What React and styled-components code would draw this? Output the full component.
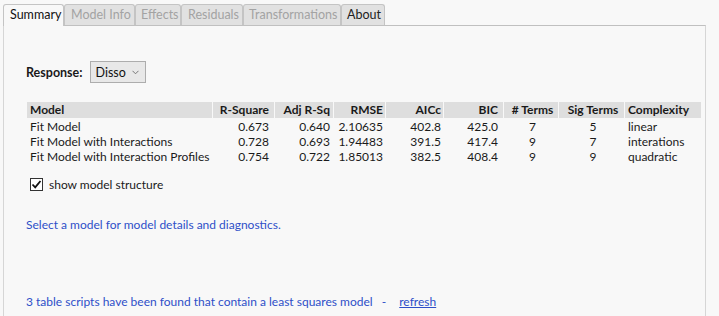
import React from "react";
import styled, { createGlobalStyle } from "styled-components";

const Global = createGlobalStyle`
  html, body { margin: 0; padding: 0; background: #f8f8f8; }
  body { font-family: Lato, "Noto Sans", sans-serif; font-size: 12px; color: #1a1a1a; }
`;

const Page = styled.div`
  padding: 4px 5px 0 3px;
  width: 711px;
  height: 316px;
  box-sizing: border-box;
  display: flex;
  flex-direction: column;
`;

const TabBar = styled.div`
  display: flex;
  height: 22px;
  position: relative;
  z-index: 1;
`;

const Tab = styled.div`
  box-sizing: border-box;
  width: ${(p) => p.$w}px;
  height: ${(p) => (p.$active ? 22 : 21)}px;
  padding-left: ${(p) => p.$pl}px;
  line-height: 20px;
  font-size: 12.5px;
  border: 1px solid #c4c4c4;
  border-bottom: none;
  border-radius: 3px 3px 0 0;
  background: ${(p) => (p.$active ? "#f8f8f8" : "#e1e1e1")};
  color: ${(p) => (p.$active ? "#111" : p.$dim ? "#a3a3a3" : "#222")};
  white-space: nowrap;
`;

const Panel = styled.div`
  flex: 1;
  margin-top: -1px;
  border-top: 1px solid #c0c0c0;
  border-left: 1px solid #d6d6d6;
  border-right: 1px solid #d6d6d6;
  padding: 35px 0 0 22px;
  box-sizing: border-box;
  display: flex;
  flex-direction: column;
`;

const ResponseRow = styled.div`
  display: flex;
  align-items: center;
  gap: 7px;
`;

const Label = styled.span`
  font-weight: 700;
  font-size: 12.5px;
`;

const Select = styled.div`
  box-sizing: border-box;
  width: 56px;
  height: 22px;
  border: 1px solid #adadad;
  background: #e8e8e8;
  display: flex;
  align-items: center;
  justify-content: space-between;
  padding: 0 6px 0 5px;
  font-size: 12.5px;
  color: #111;
`;

const Table = styled.div`
  margin-top: 19px;
  margin-left: 1px;
  display: grid;
  grid-template-columns: 185px 61px 58px 51px 57px 59px 54px 65px 76px;
  column-gap: 1px;
  width: max-content;
`;

const Head = styled.div`
  background: #dedede;
  font-weight: 700;
  height: 16px;
  line-height: 16px;
  text-align: ${(p) => p.$align || "left"};
  padding: 0 ${(p) => p.$pr ?? 3}px 0 3px;
  white-space: nowrap;
  overflow: hidden;
`;

const Cell = styled.div`
  height: 15px;
  line-height: 15px;
  text-align: ${(p) => p.$align || "left"};
  padding: 0 ${(p) => p.$pr ?? 3}px 0 3px;
  white-space: nowrap;
  margin-top: ${(p) => (p.$first ? 1 : 0)}px;
`;

const CheckRow = styled.label`
  margin-top: 13px;
  margin-left: 4px;
  display: flex;
  align-items: center;
  gap: 6px;
`;

const Box = styled.span`
  width: 13px;
  height: 13px;
  box-sizing: border-box;
  border: 1px solid #333;
  background: #fff;
  display: flex;
  align-items: center;
  justify-content: center;
`;

const Info = styled.div`
  color: #2e4fc8;
  margin-top: 25px;
`;

const Footer = styled.div`
  color: #2e4fc8;
  margin-top: 62px;
  display: flex;
  white-space: pre;
`;

const Link = styled.a`
  color: #2e4fc8;
  text-decoration: underline;
  margin-left: 13px;
`;

const cols = [
  { k: "model", label: "Model", align: "left" },
  { k: "r2", label: "R-Square", align: "right", pr: 5 },
  { k: "adj", label: "Adj R-Sq", align: "right", pr: 3 },
  { k: "rmse", label: "RMSE", align: "right", pr: 2 },
  { k: "aicc", label: "AICc", align: "right", pr: 2 },
  { k: "bic", label: "BIC", align: "right", pr: 5 },
  { k: "terms", label: "# Terms", align: "center", pr: 0 },
  { k: "sig", label: "Sig Terms", align: "center", pr: 0 },
  { k: "cx", label: "Complexity", align: "left" },
];

const rows = [
  { model: "Fit Model", r2: "0.673", adj: "0.640", rmse: "2.10635", aicc: "402.8", bic: "425.0", terms: "7", sig: "5", cx: "linear" },
  { model: "Fit Model with Interactions", r2: "0.728", adj: "0.693", rmse: "1.94483", aicc: "391.5", bic: "417.4", terms: "9", sig: "7", cx: "interations" },
  { model: "Fit Model with Interaction Profiles", r2: "0.754", adj: "0.722", rmse: "1.85013", aicc: "382.5", bic: "408.4", terms: "9", sig: "9", cx: "quadratic" },
];

const tabs = [
  { t: "Summary", w: 61, pl: 6, active: true },
  { t: "Model Info", w: 71, pl: 6, dim: true },
  { t: "Effects", w: 46, pl: 5, dim: true },
  { t: "Residuals", w: 62, pl: 6, dim: true },
  { t: "Transformations", w: 98, pl: 5, dim: true },
  { t: "About", w: 44, pl: 5 },
];

export default function App() {
  return (
    <>
      <Global />
      <Page>
        <TabBar>
          {tabs.map((t) => (
            <Tab key={t.t} $w={t.w} $pl={t.pl} $active={t.active} $dim={t.dim}>
              {t.t}
            </Tab>
          ))}
        </TabBar>
        <Panel>
          <ResponseRow>
            <Label>Response:</Label>
            <Select>
              <span>Disso</span>
              <svg width="7" height="5" viewBox="0 0 7 5">
                <path d="M0.5 0.8 L3.5 3.8 L6.5 0.8" fill="none" stroke="#777" strokeWidth="1" />
              </svg>
            </Select>
          </ResponseRow>
          <Table>
            {cols.map((c) => (
              <Head key={c.k} $align={c.align} $pr={c.pr}>{c.label}</Head>
            ))}
            {rows.map((r, i) =>
              cols.map((c) => (
                <Cell key={i + c.k} $align={c.align} $pr={c.pr} $first={i === 0}>
                  {r[c.k]}
                </Cell>
              ))
            )}
          </Table>
          <CheckRow>
            <Box>
              <svg width="11" height="11" viewBox="0 0 11 11">
                <path d="M1.5 5.5 L4.2 8.3 L9.5 2" fill="none" stroke="#111" strokeWidth="1.8" />
              </svg>
            </Box>
            <span>show model structure</span>
          </CheckRow>
          <Info>Select a model for model details and diagnostics.</Info>
          <Footer>
            <span>3 table scripts have been found that contain a least squares model   -</span>
            <Link href="#">refresh</Link>
          </Footer>
        </Panel>
      </Page>
    </>
  );
}
